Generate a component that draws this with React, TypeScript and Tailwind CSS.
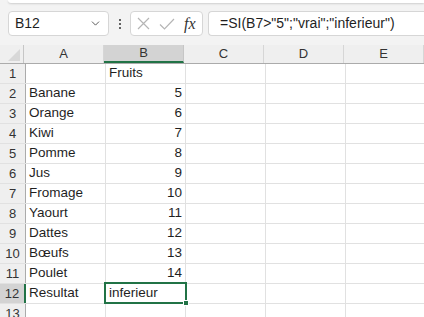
import { ChevronDown } from 'lucide-react';

const rows: [string, string][] = [
  ['', 'Fruits'],
  ['Banane', '5'],
  ['Orange', '6'],
  ['Kiwi', '7'],
  ['Pomme', '8'],
  ['Jus', '9'],
  ['Fromage', '10'],
  ['Yaourt', '11'],
  ['Dattes', '12'],
  ['Bœufs', '13'],
  ['Poulet', '14'],
  ['Resultat', 'inferieur'],
  ['', ''],
];

const cols = ['A', 'B', 'C', 'D', 'E'];

export default function App() {
  return (
    <div
      className="w-[424px] h-[317px] overflow-hidden bg-[#f3f3f3] text-[#1f1f1f]"
      style={{ fontFamily: '"Liberation Sans", Arial, sans-serif' }}
    >
      {/* ribbon edge */}
      <div className="h-[3px] ml-[8px] bg-white rounded-bl-[6px] shadow-[0_1px_2px_rgba(0,0,0,0.15)]" />

      {/* formula bar */}
      <div className="flex items-center h-[25px] mt-[8px]">
        <div className="ml-[8px] w-[101px] h-[25px] bg-white border border-[#d6d6d6] rounded-[4px] flex items-center justify-between pl-[6px] pr-[6px]">
          <span className="text-[14px]">B12</span>
          <ChevronDown className="w-[13px] h-[13px] text-[#444]" strokeWidth={1.6} />
        </div>
        <div className="w-[21px] flex flex-col items-center gap-[2px]">
          <span className="w-[2px] h-[2px] bg-[#333] rounded-full" />
          <span className="w-[2px] h-[2px] bg-[#333] rounded-full" />
          <span className="w-[2px] h-[2px] bg-[#333] rounded-full" />
        </div>
        <div className="w-[73px] h-[25px] bg-white border border-[#d6d6d6] rounded-[4px] flex items-center pl-[6px]">
          <svg width="13" height="13" viewBox="0 0 13 13" className="text-[#b5b5b5]">
            <path d="M1 1L12 12M12 1L1 12" stroke="currentColor" strokeWidth="1.2" fill="none" />
          </svg>
          <svg width="16" height="12" viewBox="0 0 16 12" className="ml-[9px] text-[#b5b5b5]">
            <path d="M1 6.5L5.5 11L15 1" stroke="currentColor" strokeWidth="1.2" fill="none" />
          </svg>
          <span
            className="ml-[9px] text-[16px] italic text-[#333] leading-none"
            style={{ fontFamily: '"Liberation Serif", "DejaVu Serif", serif' }}
          >
            fx
          </span>
        </div>
        <div className="ml-[5px] flex-1 h-[25px] bg-white border border-r-0 border-[#d6d6d6] rounded-l-[4px] flex items-center pl-[11px]">
          <span className="text-[14px] whitespace-nowrap">=SI(B7&gt;"5";"vrai";"inferieur")</span>
        </div>
      </div>

      {/* grid */}
      <div className="mt-[9px] relative">
        <div className="flex h-[19px] border-b border-[#ababab] bg-[#efefef]">
          <div className="w-[26px] border-r border-[#c6c6c6] relative">
            <div
              className="absolute right-[3px] bottom-[2px] w-[12px] h-[12px] bg-[#d8d8d8]"
              style={{ clipPath: 'polygon(100% 0, 100% 100%, 0 100%)' }}
            />
          </div>
          {cols.map((c) => (
            <div
              key={c}
              className={
                c === 'B'
                  ? 'w-[80px] shrink-0 border-r border-[#c6c6c6] bg-[#d3d3d3] border-b-2 border-b-[#217346] flex items-center justify-center text-[13px] text-[#333]'
                  : 'w-[80px] shrink-0 border-r border-[#d6d6d6] flex items-center justify-center text-[13px] text-[#333]'
              }
            >
              {c}
            </div>
          ))}
        </div>

        {rows.map(([a, b], i) => {
          const n = i + 1;
          const sel = n === 12;
          const numeric = b !== '' && !isNaN(Number(b));
          return (
            <div key={n} className="flex h-[20px] border-b border-[#e1e1e1] bg-white">
              <div
                className={
                  sel
                    ? 'w-[26px] shrink-0 bg-[#d3d3d3] border-r-2 border-r-[#217346] flex items-center justify-center text-[13px] text-[#333]'
                    : 'w-[26px] shrink-0 bg-[#efefef] border-r border-[#ababab] flex items-center justify-center text-[13px] text-[#333]'
                }
              >
                {n}
              </div>
              <div className="w-[80px] shrink-0 border-r border-[#e1e1e1] flex items-center pl-[3px] text-[13.5px]">
                {a}
              </div>
              <div
                className={
                  numeric
                    ? 'w-[80px] shrink-0 border-r border-[#e1e1e1] flex items-center justify-end pr-[3px] text-[13.5px]'
                    : 'w-[80px] shrink-0 border-r border-[#e1e1e1] flex items-center pl-[3px] text-[13.5px]'
                }
              >
                {b}
              </div>
              <div className="w-[80px] shrink-0 border-r border-[#e1e1e1]" />
              <div className="w-[80px] shrink-0 border-r border-[#e1e1e1]" />
              <div className="w-[80px] shrink-0 border-r border-[#e1e1e1]" />
            </div>
          );
        })}

        {/* selected cell B12 */}
        <div className="absolute left-[104px] top-[237px] w-[83px] h-[22px] border-2 border-[#217346] pointer-events-none">
          <div className="absolute -right-[4px] -bottom-[4px] w-[6px] h-[6px] bg-[#217346] border border-white" />
        </div>
      </div>
    </div>
  );
}
